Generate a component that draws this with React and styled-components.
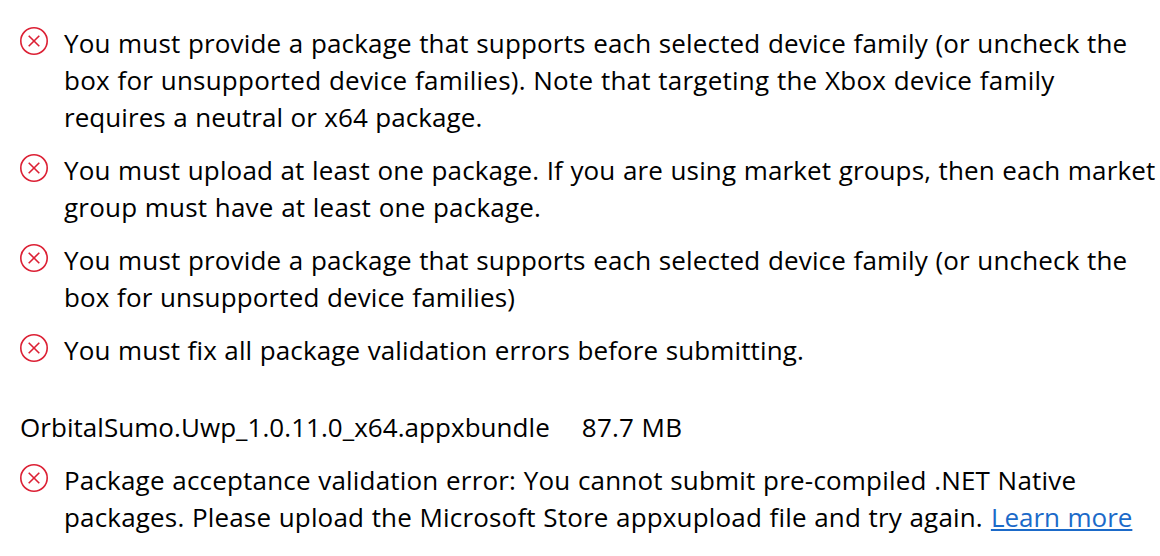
import React from "react";
import styled, { createGlobalStyle } from "styled-components";

const errors = [
  [
    ["You must provide a package that supports each selected device family (or uncheck the", 0.16],
    ["box for unsupported device families). Note that targeting the Xbox device family", 0.23],
    ["requires a neutral or x64 package.", 0.07],
  ],
  [
    ["You must upload at least one package. If you are using market groups, then each market", 0.14],
    ["group must have at least one package.", 0.2],
  ],
  [
    ["You must provide a package that supports each selected device family (or uncheck the", 0.16],
    ["box for unsupported device families)", 0.13],
  ],
  [["You must fix all package validation errors before submitting.", 0.12]],
];

function ErrorIcon() {
  return (
    <Icon viewBox="0 0 28 28">
      <circle cx="14" cy="14" r="13.2" />
      <path d="M8.7 8.7L19.3 19.3M19.3 8.7L8.7 19.3" />
    </Icon>
  );
}

function App() {
  return (
    <Page>
      <GlobalStyle />
      <ErrorList>
        {errors.map((lines, i) => (
          <ErrorItem key={i}>
            <ErrorIcon />
            <Message>
              {lines.map(([text, spacing]) => (
                <Line key={text} $spacing={spacing}>{text}</Line>
              ))}
            </Message>
          </ErrorItem>
        ))}
      </ErrorList>
      <PackageRow>
        <Line $spacing={0.05}>OrbitalSumo.Uwp_1.0.11.0_x64.appxbundle</Line>
        <Line $spacing={0.2}>87.7 MB</Line>
      </PackageRow>
      <ErrorItem>
        <ErrorIcon />
        <Message>
          <Line $spacing={0.19}>Package acceptance validation error: You cannot submit pre-compiled .NET Native</Line>
          <LastLine>
            <Line $spacing={0.17}>packages. Please upload the Microsoft Store appxupload file and try again.</Line>
            <Link href="#">Learn more</Link>
          </LastLine>
        </Message>
      </ErrorItem>
    </Page>
  );
}

export default App;

const GlobalStyle = createGlobalStyle`
  * {
    box-sizing: border-box;
  }
  body {
    margin: 0;
    background: #ffffff;
  }
`;

const Page = styled.div`
  width: 1160px;
  height: 556px;
  padding: 25px 0 0 20px;
  overflow: hidden;
  color: #000000;
  font-family: "Open Sans", "Noto Sans", sans-serif;
  font-size: 26px;
  line-height: 37px;
  word-spacing: 0.6px;
`;

const ErrorList = styled.div`
  display: flex;
  flex-direction: column;
  gap: 16px;
`;

const ErrorItem = styled.div`
  display: flex;
  align-items: flex-start;
  gap: 16px;
`;

const Icon = styled.svg`
  flex: none;
  width: 28px;
  height: 28px;
  margin-top: 2px;
  fill: none;
  stroke: #dc2034;
  stroke-width: 1.6;
`;

const Message = styled.div`
  display: flex;
  flex-direction: column;
  align-items: flex-start;
`;

const Line = styled.span`
  white-space: nowrap;
  letter-spacing: ${(props) => props.$spacing}px;
`;

const LastLine = styled.div`
  display: flex;
  gap: 8px;
`;

const PackageRow = styled.div`
  display: flex;
  gap: 32px;
  margin: 40px 0 16px;
`;

const Link = styled.a`
  color: #1b6ac9;
  white-space: nowrap;
  text-decoration-thickness: 2px;
  text-decoration-skip-ink: none;
  text-underline-offset: 2px;
`;
